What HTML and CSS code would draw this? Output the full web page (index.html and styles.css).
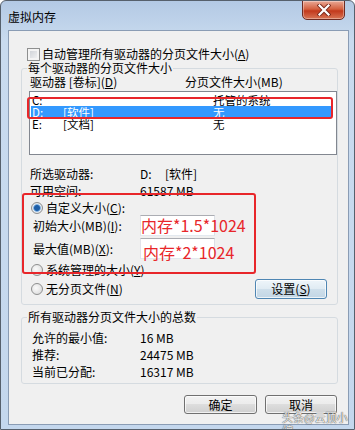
FILE: index.html
```html
<!DOCTYPE html>
<html lang="zh-CN">

<head>
    <meta charset="UTF-8">
    <meta name="viewport" content="width=device-width, initial-scale=1.0">
    <title>虚拟内存</title>
    <link rel="stylesheet" href="styles.css">
</head>

<body>
    <div class="window">
        <div class="titlebar">
            <span class="title">虚拟内存</span>
            <button class="close-btn" aria-label="关闭">
                <svg width="14" height="12" viewBox="0 0 14 12">
                    <path d="M2.5 1.5 L11.5 10.5 M11.5 1.5 L2.5 10.5" stroke="#7a2a1c" stroke-width="4" stroke-linecap="square" />
                    <path d="M2.5 1.5 L11.5 10.5 M11.5 1.5 L2.5 10.5" stroke="#fff" stroke-width="2.2" stroke-linecap="square" />
                </svg>
            </button>
        </div>

        <div class="client">
            <div class="check-row">
                <span class="checkbox"></span>
                <span>自动管理所有驱动器的分页文件大小(<u>A</u>)</span>
            </div>

            <fieldset class="group">
                <legend>每个驱动器的分页文件大小</legend>
                <div class="list-head">
                    <span class="head-drive">驱动器 [卷标](<u>D</u>)</span>
                    <span>分页文件大小(MB)</span>
                </div>
                <div class="listbox">
                    <div class="list-row"><span class="col-letter">C:</span><span class="col-label"></span><span>托管的系统</span></div>
                    <div class="list-row selected"><span class="col-letter">D:</span><span class="col-label">[软件]</span><span>无</span></div>
                    <div class="list-row"><span class="col-letter">E:</span><span class="col-label">[文档]</span><span>无</span></div>
                    <div class="mark mark-list"></div>
                </div>

                <div class="info">
                    <div class="info-row"><span class="info-label">所选驱动器:</span><span class="drive-letter">D:</span><span>[软件]</span></div>
                    <div class="info-row"><span class="info-label">可用空间:</span><span>61587 MB</span></div>
                </div>

                <div class="size-options">
                    <div class="radio-row row-custom"><span class="radio checked"></span><span>自定义大小(<u>C</u>):</span></div>
                    <div class="size-row">
                        <span class="size-label">初始大小(MB)(<u>I</u>):</span>
                        <div class="textbox">内存*1.5*1024</div>
                    </div>
                    <div class="size-row row-max">
                        <span class="size-label">最大值(MB)(<u>X</u>):</span>
                        <div class="textbox textbox-max">内存*2*1024</div>
                    </div>
                    <div class="radio-row row-system"><span class="radio"></span><span>系统管理的大小(<u>Y</u>)</span></div>
                    <div class="mark mark-size"></div>
                </div>

                <div class="radio-row row-none">
                    <span class="radio"></span><span>无分页文件(<u>N</u>)</span>
                    <button class="btn btn-set">设置(<u>S</u>)</button>
                </div>
            </fieldset>

            <fieldset class="group group-total">
                <legend>所有驱动器分页文件大小的总数</legend>
                <div class="total-row"><span class="total-label">允许的最小值:</span><span>16 MB</span></div>
                <div class="total-row"><span class="total-label">推荐:</span><span>24475 MB</span></div>
                <div class="total-row"><span class="total-label">当前已分配:</span><span>16317 MB</span></div>
            </fieldset>

            <div class="dialog-buttons">
                <button class="btn btn-ok">确定</button>
                <button class="btn btn-cancel">取消</button>
            </div>
        </div>

        <span class="watermark">头条@云顶小编</span>
    </div>
</body>

</html>
```

FILE: styles.css
```css
* {
    box-sizing: border-box;
}

body {
    margin: 0;
    font-family: "Noto Sans CJK SC", "Liberation Sans", sans-serif;
    font-size: 12px;
    color: #000;
    background: #fff;
}

u {
    text-decoration: underline;
    text-underline-offset: 1px;
}

/* window frame (Win7 basic look) */
.window {
    position: relative;
    width: 355px;
    height: 430px;
    border: 1px solid #56606c;
    border-radius: 6px 6px 0 0;
    background: linear-gradient(#b3c9e4, #c9dbef 40px, #c4d7ed);
    overflow: hidden;
}

.titlebar {
    display: flex;
    justify-content: space-between;
    align-items: flex-start;
    height: 29px;
}

.title {
    padding: 9px 0 0 7px;
    line-height: 14px;
    font-size: 12px;
}

.close-btn {
    display: flex;
    align-items: center;
    justify-content: center;
    width: 43px;
    height: 20px;
    margin: -1px 9px 0 0;
    padding: 0;
    border: 1px solid #6e2b22;
    border-radius: 0 0 5px 5px;
    background: linear-gradient(#e9a996, #d4603f 45%, #c2391c 55%, #d87555);
    box-shadow: inset 0 0 0 1px rgba(255, 255, 255, 0.35);
}

.client {
    width: 341px;
    height: 395px;
    margin-left: 7px;
    border: 1px solid #8a9cb4;
    background: #f0f0f0;
}

.check-row {
    display: flex;
    align-items: center;
    gap: 2px;
    margin-top: 16px;
    padding-left: 18px;
    line-height: 14px;
}

.checkbox {
    width: 13px;
    height: 13px;
    border: 1px solid #8e8f8f;
    box-shadow: inset 0 0 0 2px #f4f4f4;
    background: linear-gradient(135deg, #c9cdd3, #f7f7f7);
}

/* group boxes */
.group {
    position: relative;
    min-width: 0;
    margin: 0 10px 0 12px;
    padding: 0 0 5px;
    border: 1px solid #d5dbe0;
    border-radius: 3px;
}

.group legend {
    margin-left: 5px;
    padding: 0 1px;
    line-height: 14px;
}

.list-head {
    display: flex;
    padding-left: 8px;
    line-height: 14px;
}

.head-drive {
    width: 155px;
}

.listbox {
    position: relative;
    width: 308px;
    height: 64px;
    margin: 2px 0 0 7px;
    padding-top: 2px;
    border: 1px solid #828790;
    background: #fff;
}

.list-row {
    display: flex;
    height: 12px;
    line-height: 12px;
    margin: 0 5px 0 1px;
    padding-left: 1px;
    font-size: 11.5px;
}

.list-row.selected {
    background: #3399ff;
    color: #fff;
}

.col-letter {
    width: 31px;
}

.col-label {
    width: 150px;
}

/* red annotation boxes */
.mark {
    position: absolute;
    border: 2px solid #e8262a;
    border-radius: 3px;
}

.mark-list {
    left: -3px;
    top: 5px;
    width: 306px;
    height: 22px;
}

.mark-size {
    left: 0;
    top: -8px;
    width: 234px;
    height: 81px;
}

.info {
    margin-top: 10px;
}

.info-row {
    display: flex;
    padding-left: 8px;
    line-height: 17px;
}

.info-label {
    width: 110px;
}

.drive-letter {
    width: 25px;
}

.size-options {
    position: relative;
    margin-top: 2px;
}

.radio-row {
    display: flex;
    align-items: center;
    gap: 3px;
    padding-left: 9px;
    line-height: 14px;
}

.radio {
    width: 12px;
    height: 12px;
    border: 1px solid #8e8f8f;
    border-radius: 50%;
    background: radial-gradient(circle at 40% 40%, #fbfbfb, #d6d6d6);
}

.radio.checked {
    background: radial-gradient(circle, #1f5fa8 0 2.5px, #5d9ad6 3.2px, #e7eef6 4.2px, #d6d6d6 6px);
}

.row-system {
    margin-top: 4px;
}

.row-none {
    height: 21px;
    margin-top: 1px;
}

.size-row {
    display: flex;
    align-items: center;
    height: 21px;
    padding-left: 11px;
}

.row-max {
    margin-top: 2px;
}

.size-label {
    width: 107px;
}

.textbox {
    width: 75px;
    height: 21px;
    border: 1px solid;
    border-color: #abadb3 #dbdfe6 #e3e9ef #e2e3ea;
    background: #fff;
    color: #e8262a;
    font-size: 16px;
    line-height: 19px;
    white-space: nowrap;
    overflow: visible;
}

.textbox-max {
    padding: 4px 0 0 2px;
}

/* push buttons */
.btn {
    font-family: inherit;
    font-size: 12px;
    color: #000;
    padding: 0;
    border: 1px solid #707070;
    border-radius: 3px;
    background: linear-gradient(#f2f2f2, #ebebeb 50%, #dddddd 50%, #cfcfcf);
    box-shadow: inset 0 0 0 1px rgba(255, 255, 255, 0.7);
}

.btn-set {
    width: 72px;
    height: 20px;
    margin: 0 10px 0 auto;
    border-color: #4f86b3;
    background: linear-gradient(#eef5fa, #e0ebf3 50%, #cfdfeb 50%, #c2d6e5);
}

.group-total {
    margin-top: 5px;
    padding-bottom: 3px;
}

.total-row {
    display: flex;
    padding-left: 10px;
    line-height: 17px;
}

.total-row:first-of-type {
    margin-top: 5px;
}

.total-label {
    width: 108px;
}

.dialog-buttons {
    display: flex;
    justify-content: flex-end;
    gap: 8px;
    margin-top: 11px;
    padding-right: 11px;
}

.btn-ok {
    width: 73px;
    height: 19px;
}

.btn-cancel {
    width: 72px;
    height: 19px;
}

.watermark {
    position: absolute;
    left: 281px;
    top: 410px;
    font-size: 11px;
    line-height: 13px;
    color: rgba(255, 255, 255, 0.9);
    text-shadow: 0 0 1px #4a4a4a, 0 0 1px #4a4a4a;
}
```
